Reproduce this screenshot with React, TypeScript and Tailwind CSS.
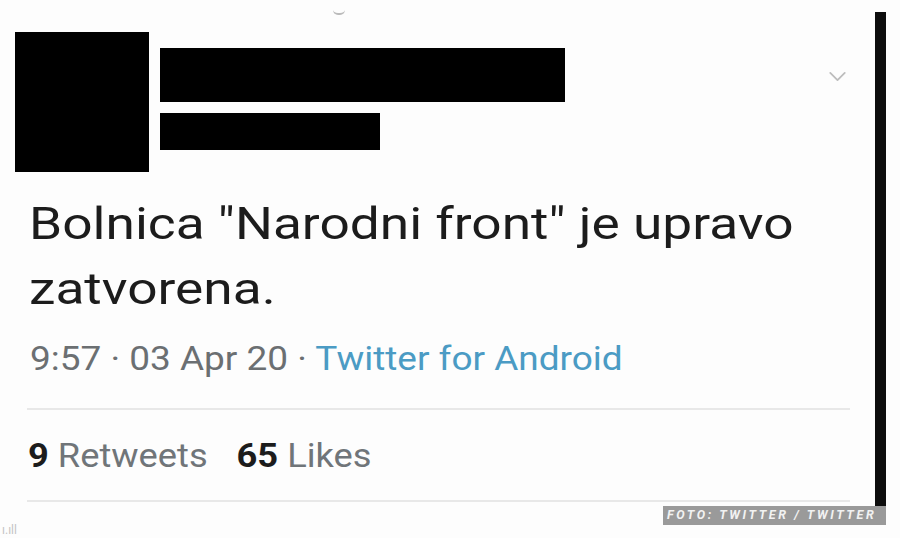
import { ChevronDown } from "lucide-react";

const font = { fontFamily: "Roboto, 'Noto Sans', sans-serif" };

export default function App() {
  return (
    <div className="relative flex h-[538px] w-[900px] overflow-hidden bg-[#fdfdfd]" style={font}>
      {/* tweet card */}
      <div className="flex w-[875px] flex-col">
        <div className="flex h-[32px] items-start pl-[333px] pt-[10px]">
          <div className="h-[5px] w-[12px] rounded-b-full border-b-2 border-[#bbbbbb]" />
        </div>
        <div className="flex">
          <div className="ml-[15px] h-[140px] w-[134px] bg-black" />
          <div className="ml-[11px] flex flex-col pt-[16px]">
            <div className="h-[54px] w-[405px] bg-black" />
            <div className="mt-[11px] h-[37px] w-[220px] bg-black" />
          </div>
          <div className="ml-auto mr-[23px] pt-[30px] text-[#bdbdbd]">
            <ChevronDown size={29} strokeWidth={1.5} />
          </div>
        </div>

        <div className="ml-[29px] mt-[20px] origin-left scale-x-[1.21] text-[44px] leading-[65px] text-[#1c1c1c]">
          Bolnica "Narodni front" je upravo
          <br />
          zatvorena.
        </div>

        <div className="ml-[30px] mt-[17px] origin-left scale-x-[1.12] text-[33px] leading-[40px] text-[#6b6f72]">
          9:57 · 03 Apr 20 · <span className="text-[#4b9bc4]">Twitter for Android</span>
        </div>

        <div className="ml-[27px] mr-[25px] mt-[29px] border-t-2 border-[#e8e8e8]" />

        <div className="ml-[28px] mt-[26px] origin-left scale-x-[1.1] text-[33px] leading-[40px] text-[#707579]">
          <span className="font-bold text-[#1c1c1c]">9</span> Retweets{" "}
          <span className="ml-[18px] font-bold text-[#1c1c1c]">65</span> Likes
        </div>

        <div className="ml-[27px] mr-[25px] mt-[24px] border-t-2 border-[#e8e8e8]" />

        <div className="ml-[2px] mt-[22px] text-[12px] leading-[12px] text-[#c4c4c4]">ı.ıll</div>
      </div>

      {/* right edge bar */}
      <div className="mt-[12px] h-[513px] w-[11px] bg-[#0d0d0d]" />

      <div className="absolute left-[663px] top-[506px] flex h-[19px] w-[223px] items-center bg-[#9a9a9a] pl-[4px] text-[12.5px] font-bold italic tracking-[2.6px] text-[#f2f2f2]">
        FOTO: TWITTER / TWITTER
      </div>
    </div>
  );
}
